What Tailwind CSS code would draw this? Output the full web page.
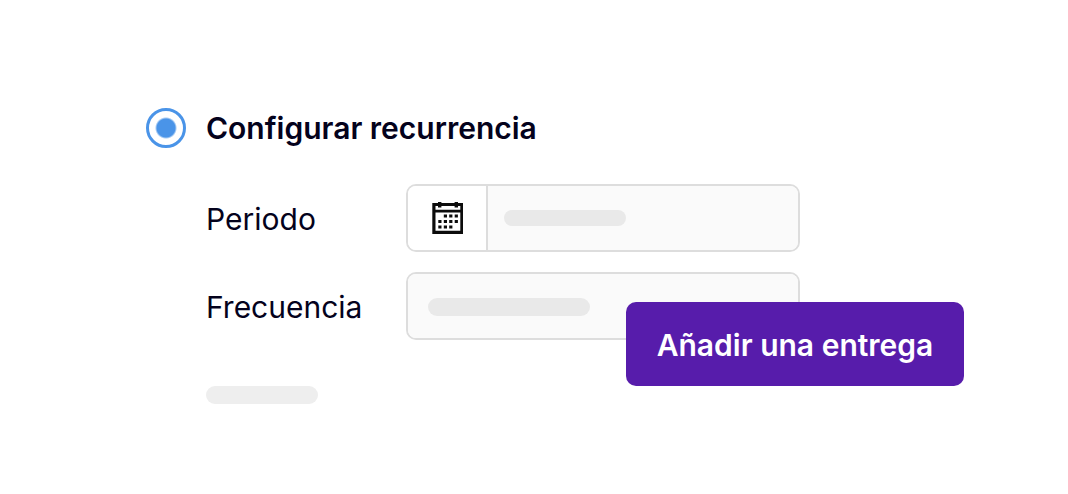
<!DOCTYPE html>
<html lang="es">
<head>
    <meta charset="UTF-8">
    <meta name="viewport" content="width=device-width, initial-scale=1.0">
    <title>Configurar recurrencia</title>
    <script src="https://cdn.jsdelivr.net/npm/@tailwindcss/browser@4"></script>
</head>
<body class="bg-white min-h-screen font-['Inter',sans-serif] text-[#04021c] text-[30px] leading-10">
<form class="relative pt-27 pl-[146px] pr-[104px]">
    <div class="flex items-center gap-5">
        <input type="radio" id="recurrence" name="mode" checked class="appearance-none shrink-0 w-10 h-10 rounded-full border-3 border-[#4a94e8] bg-[radial-gradient(circle,#4a94e8_9px,transparent_11px)]">
        <label for="recurrence" class="font-semibold">Configurar recurrencia</label>
    </div>

    <div class="mt-9 pl-15 pr-[164px] flex flex-col gap-5">
        <div class="flex items-center">
            <label for="period" class="w-[200px] shrink-0 pt-0.5">Periodo</label>
            <div class="flex flex-1 h-17 border-2 border-[#dddddd] rounded-[10px] overflow-hidden">
                <button type="button" aria-label="Abrir calendario" class="w-20 shrink-0 flex items-center justify-center bg-white border-r-2 border-[#dddddd]">
                    <svg class="w-8 h-8" viewBox="0 0 32 32" fill="none" stroke="#0c0c0c">
                        <path d="M2.9 2.5H30.9V30.4H2.9Z" stroke-width="3.2"/>
                        <path d="M3 9.2H31" stroke-width="2.8"/>
                        <path d="M8.7 0V5.5M25.3 0V5.5" stroke-width="3.4"/>
                        <path d="M12.8 14H16M18.2 14H21.4M23.7 14H26.9M7.3 19.6H10.5M12.8 19.6H16M18.2 19.6H21.4M23.7 19.6H26.9M7.3 25.1H10.5M12.8 25.1H16M18.2 25.1H21.4" stroke-width="3"/>
                    </svg>
                </button>
                <div class="relative flex-1">
                    <input type="text" id="period" name="period" class="block w-full h-full px-4 bg-[#fafafa] focus:outline-none">
                    <span class="absolute left-4 top-6 w-[122px] h-4 rounded-full bg-[#e9e9e9] pointer-events-none"></span>
                </div>
            </div>
        </div>

        <div class="flex items-center">
            <label for="frequency" class="w-[200px] shrink-0 pt-0.5">Frecuencia</label>
            <div class="relative flex-1 h-17 border-2 border-[#dddddd] rounded-[10px] overflow-hidden">
                <input type="text" id="frequency" name="frequency" class="block w-full h-full px-5 bg-[#fafafa] focus:outline-none">
                <span class="absolute left-5 top-6 w-[162px] h-[18px] rounded-full bg-[#e9e9e9] pointer-events-none"></span>
            </div>
        </div>
    </div>

    <div class="ml-15 mt-[46px] w-28 h-[18px] rounded-full bg-[#eeeeee]"></div>

    <!-- floats over the lower right corner of the fields -->
    <button type="submit" class="absolute right-[104px] bottom-[18px] w-[338px] h-21 pt-0.5 rounded-[10px] bg-[#571cab] text-white font-semibold">
        Añadir una entrega
    </button>
</form>
</body>
</html>
